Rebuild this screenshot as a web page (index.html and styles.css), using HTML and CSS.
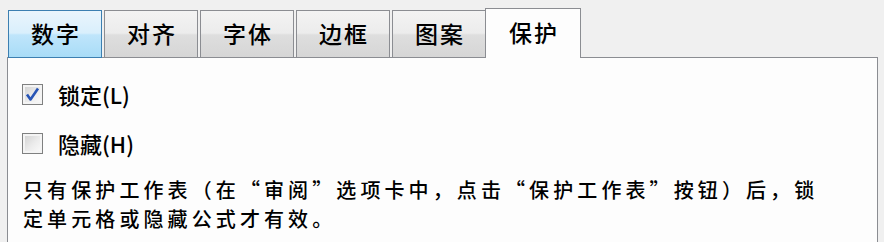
FILE: index.html
```html
<!DOCTYPE html>
<html lang="zh-CN">
<head>
    <meta charset="UTF-8">
    <title>设置单元格格式 - 保护</title>
    <link rel="stylesheet" href="styles.css">
</head>
<body>
    <div class="tabs">
        <div class="tab tab-hover">数字</div>
        <div class="tab">对齐</div>
        <div class="tab">字体</div>
        <div class="tab">边框</div>
        <div class="tab">图案</div>
        <div class="tab tab-active">保护</div>
    </div>
    <div class="panel">
        <label class="check-row">
            <span class="checkbox">
                <svg width="15" height="15" viewBox="0 0 15 15">
                    <path d="M2 7.5 L5.5 12.5 L13 1.5" fill="none" stroke="#2754b5" stroke-width="2.6" stroke-linejoin="round"/>
                </svg>
            </span>
            <span class="check-label">锁定(L)</span>
        </label>
        <label class="check-row">
            <span class="checkbox"></span>
            <span class="check-label">隐藏(H)</span>
        </label>
        <p class="note">只有保护工作表（在“审阅”选项卡中，点击“保护工作表”按钮）后，锁定单元格或隐藏公式才有效。</p>
    </div>
</body>
</html>
```

FILE: styles.css
```css
body {
    margin: 0;
    background: #f0f0f0;
    font-family: "Noto Sans CJK SC", "Liberation Sans", sans-serif;
    color: #000;
    height: 242px;
    overflow: hidden;
}

.tabs {
    display: flex;
    align-items: flex-end;
    gap: 2px;
    height: 50px;
    padding: 8px 0 0 8px;
    position: relative;
    z-index: 1;
}

.tab {
    box-sizing: border-box;
    width: 94px;
    height: 48px;
    border: 1px solid #8b8d92;
    background: linear-gradient(#f3f3f3 0%, #ececec 48%, #dedede 52%, #d6d6d6 100%);
    font-size: 23px;
    font-weight: 500;
    letter-spacing: 2px;
    text-align: center;
    line-height: 44px;
    padding-left: 2px;
}

.tab-hover {
    border-color: #3c7fb1;
    background: linear-gradient(#eaf5fc 0%, #d9effc 48%, #bfe5fb 52%, #a8dcf7 100%);
}

.tab-active {
    width: 96px;
    height: 50px;
    margin-left: -3px;
    border-bottom: none;
    background: #fdfdfd;
    line-height: 46px;
}

.panel {
    box-sizing: border-box;
    width: 871px;
    height: 200px;
    margin: -1px 0 0 7px;
    border: 1px solid #8b8d92;
    background: #fdfdfd;
    padding: 21px 0 0 14px;
}

.check-row {
    display: flex;
    align-items: center;
    height: 30px;
    margin-bottom: 19px;
}

.checkbox {
    box-sizing: border-box;
    flex-shrink: 0;
    width: 21px;
    height: 21px;
    border: 1px solid #7f8080;
    background: linear-gradient(135deg, #cfcfcf 0%, #ececec 55%, #fbfbfb 100%);
    box-shadow: inset 0 0 0 2px #f4f4f4;
    display: flex;
    align-items: center;
    justify-content: center;
}

.check-label {
    margin-left: 15px;
    font-size: 22px;
    font-weight: 500;
}

.note {
    margin: -2px 0 0 1px;
    max-width: 805px;
    font-size: 20px;
    font-weight: 500;
    letter-spacing: 4.1px;
    line-height: 29px;
}
```
